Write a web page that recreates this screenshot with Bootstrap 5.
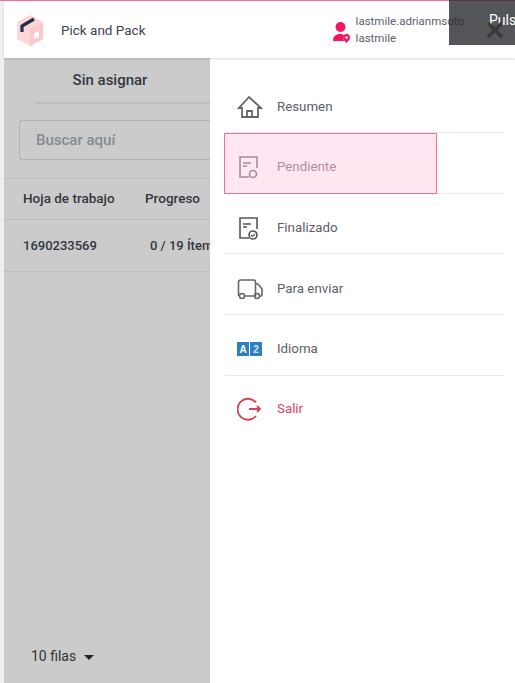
<!DOCTYPE html>
<html lang="es">
<head>
    <meta charset="UTF-8">
    <title>Pick and Pack</title>
    <link href="https://cdn.jsdelivr.net/npm/bootstrap@5.3.0/dist/css/bootstrap.min.css" rel="stylesheet">
    <style>
        html, body {
            height: 100%;
            overflow: hidden;
        }

        body {
            background: #fff;
            font-family: "Roboto", sans-serif;
            font-size: 13px;
        }

        .app-frame {
            height: 683px;
            border-left: 4px solid #efefef;
            background: #fff;
        }

        .top-line {
            height: 1px;
            background: #f06f9b;
        }

        .app-top {
            height: 57px;
            padding: 1px 0 0 12px;
            box-shadow: 0 1px 2px rgba(0, 0, 0, .15);
            z-index: 2;
            position: relative;
        }

        .brand-name {
            margin-left: 17px;
            color: #3f4552;
            font-size: 13.5px;
        }

        .user-box {
            margin-left: auto;
            margin-right: 51px;
            color: #5a6270;
            font-size: 11.5px;
            line-height: 17px;
        }

        .user-box svg {
            margin-right: 6px;
            margin-top: 3px;
        }

        .app-body {
            height: 625px;
        }

        .under-panel {
            width: 206px;
            flex: none;
            background: #cbcbcb;
            color: #33373f;
        }

        .panel-title {
            height: 46px;
            margin: 0 0 0 31px;
            padding: 11px 25px 0 0;
            text-align: center;
            font-size: 15px;
            font-weight: 500;
            border-bottom: 2px solid #bdbdbd;
            white-space: nowrap;
        }

        .find-box {
            height: 40px;
            margin: 16px 0 18px 15px;
            padding: 0 16px;
            border: 1px solid #b3b3b3;
            border-right: 0;
            border-radius: 4px 0 0 4px;
            color: #858a93;
            font-size: 15px;
            font-weight: 500;
            line-height: 38px;
        }

        .sheet-row {
            padding-left: 19px;
            white-space: nowrap;
            overflow: hidden;
            border-bottom: 1px solid #bcbcbc;
        }

        .sheet-head {
            height: 42px;
            border-top: 1px solid #bcbcbc;
            line-height: 39px;
            font-size: 13.5px;
        }

        .sheet-data {
            height: 52px;
            line-height: 51px;
        }

        .cell-one {
            width: 122px;
            flex: none;
        }

        .cell-prog {
            padding-left: 5px;
            flex: none;
        }

        .rows-pick {
            margin-top: auto;
            height: 54px;
            padding-left: 27px;
            border-top: 1px solid #c6c6c6;
            line-height: 52px;
            color: #333;
            font-size: 14px;
        }

        .rows-caret {
            display: inline-block;
            margin-left: 4px;
            border-top: 5px solid #222;
            border-left: 5px solid transparent;
            border-right: 5px solid transparent;
            vertical-align: middle;
        }

        .side-menu {
            padding: 14px 11px 0 15px;
            color: #5c6068;
            font-size: 13.3px;
        }

        .menu-row {
            height: 60.75px;
            padding: 9px 0 0 12px;
            border-bottom: 1px solid #e9e9e9;
            position: relative;
        }

        .menu-row:first-child {
            padding-top: 11px;
        }

        .menu-row:last-child {
            border-bottom: 0;
            padding-top: 6px;
        }

        .menu-row svg {
            width: 28px;
            flex: none;
            margin-right: 12px;
        }

        .menu-row.is-focus {
            color: #a8949e;
        }

        .menu-row.is-focus svg {
            opacity: .65;
        }

        .focus-box {
            position: absolute;
            left: -1px;
            top: 0;
            width: 213px;
            height: 61px;
            background: rgba(255, 105, 165, .17);
            border: 1px solid #f06f9b;
        }

        .menu-row.is-exit {
            color: #d2475f;
        }

        .hint-box {
            position: absolute;
            top: 0;
            left: 449px;
            width: 66px;
            height: 45px;
            padding: 10px 0 0 40px;
            background: rgba(40, 42, 48, .8);
            color: #fff;
            font-size: 14px;
            white-space: nowrap;
            overflow: hidden;
            z-index: 5;
        }

        .hint-x {
            position: absolute;
            left: 37px;
            top: 21px;
        }
    </style>
</head>
<body>
    <div class="top-line"></div>
    <div class="app-frame">
        <header class="app-top d-flex align-items-center">
            <svg width="28" height="33" viewBox="0 0 28 33">
                <path d="M14 1 27 8v17l-13 7-13-7V8z" fill="#fdd6da"/>
                <path d="M14 15 27 8v17l-13 7z" fill="#fcc8ce"/>
                <path d="M18 19l5-2v6l-5 2z" fill="#fff"/>
                <path d="M6 18v-6L18 5" fill="none" stroke="#26304f" stroke-width="3.200"/>
            </svg>
            <span class="brand-name">Pick and Pack</span>
            <div class="user-box d-flex align-items-center">
                <svg width="17" height="22" viewBox="0 0 17 22">
                    <circle cx="7.500" cy="6" r="5" fill="#f2185f"/>
                    <path d="M0 20c0-5 3-7 7-7 2 0 3 .5 4 1-1 2-1 4 0 6z" fill="#f2185f"/>
                    <path d="M13.500 22c-2-2-3.500-3.500-3.500-5.500a3.500 3.500 0 0 1 7 0c0 2-1.500 3.500-3.500 5.500z" fill="#f2185f"/>
                    <circle cx="13.500" cy="16.500" r="1.200" fill="#fff"/>
                </svg>
                <div>lastmile.adrianmsoto<br>lastmile</div>
            </div>
        </header>
        <div class="app-body d-flex">
            <section class="under-panel d-flex flex-column">
                <div class="panel-title">Sin asignar</div>
                <div class="find-box">Buscar aquí</div>
                <div class="sheet-row sheet-head d-flex fw-medium">
                    <div class="cell-one">Hoja de trabajo</div>
                    <div>Progreso</div>
                </div>
                <div class="sheet-row sheet-data d-flex fw-medium">
                    <div class="cell-one">1690233569</div>
                    <div class="cell-prog">0 / 19 Ítem</div>
                </div>
                <div class="rows-pick">10 filas <span class="rows-caret"></span></div>
            </section>
            <nav class="side-menu flex-grow-1">
                <div class="menu-row d-flex align-items-center">
                    <svg height="24" viewBox="0 0 28 24" fill="none" stroke="#666" stroke-width="1.800">
                        <path d="M12 2 2 13h3v9h16v-9h3z"/>
                        <path d="M10 22v-6h5v6"/>
                    </svg>
                    Resumen
                </div>
                <div class="menu-row is-focus d-flex align-items-center">
                    <span class="focus-box"></span>
                    <svg height="24" viewBox="0 0 28 24" fill="none" stroke="#666" stroke-width="1.600">
                        <path d="M20 13V2H3v20h9"/>
                        <path d="M6 8h8M6 11h4"/>
                        <circle cx="16" cy="19" r="3.500"/>
                    </svg>
                    Pendiente
                </div>
                <div class="menu-row d-flex align-items-center">
                    <svg height="24" viewBox="0 0 28 24" fill="none" stroke="#555" stroke-width="1.600">
                        <path d="M20 13V2H3v20h9"/>
                        <path d="M6 8h8M6 11h4"/>
                        <circle cx="16" cy="19" r="4"/>
                        <path d="M14 19l1.500 1.500L18 18" stroke-width="1.200"/>
                    </svg>
                    Finalizado
                </div>
                <div class="menu-row d-flex align-items-center">
                    <svg height="24" viewBox="0 0 28 24" fill="none" stroke="#666" stroke-width="1.600">
                        <path d="M1.500 19V5a2 2 0 0 1 2-2h13a2 2 0 0 1 2 2v14H8"/>
                        <path d="M18.500 7h2.500l4 5v6a1 1 0 0 1-1 1h-1"/>
                        <circle cx="5" cy="19" r="2.500"/>
                        <circle cx="20" cy="19" r="2.500"/>
                    </svg>
                    Para enviar
                </div>
                <div class="menu-row d-flex align-items-center">
                    <svg height="24" viewBox="0 0 28 24">
                        <rect x="0" y="5" width="12" height="14" fill="#2f7ebf"/>
                        <rect x="13" y="5" width="12" height="14" fill="#2f7ebf"/>
                        <text x="6" y="16" text-anchor="middle" fill="#fff" font-size="10" font-weight="700" font-family="Liberation Sans, sans-serif">A</text>
                        <text x="19" y="16" text-anchor="middle" fill="#cfe3f3" font-size="10" font-weight="700" font-family="Liberation Sans, sans-serif">2</text>
                    </svg>
                    Idioma
                </div>
                <div class="menu-row is-exit d-flex align-items-center">
                    <svg height="24" viewBox="0 0 28 24" fill="none" stroke="#d2474f" stroke-width="1.800">
                        <path d="M19 5.500A10.500 10.500 0 1 0 19 19"/>
                        <path d="M12 12h11M20 9l3 3-3 3"/>
                    </svg>
                    Salir
                </div>
            </nav>
        </div>
    </div>
    <div class="hint-box">
        Puls
        <svg class="hint-x" width="18" height="18" viewBox="0 0 18 18" stroke="#3a3a3a" stroke-width="3.500"><path d="M2 2l14 14M16 2 2 16"/></svg>
    </div>
    <script src="https://cdn.jsdelivr.net/npm/bootstrap@5.3.0/dist/js/bootstrap.bundle.min.js"></script>
</body>
</html>
